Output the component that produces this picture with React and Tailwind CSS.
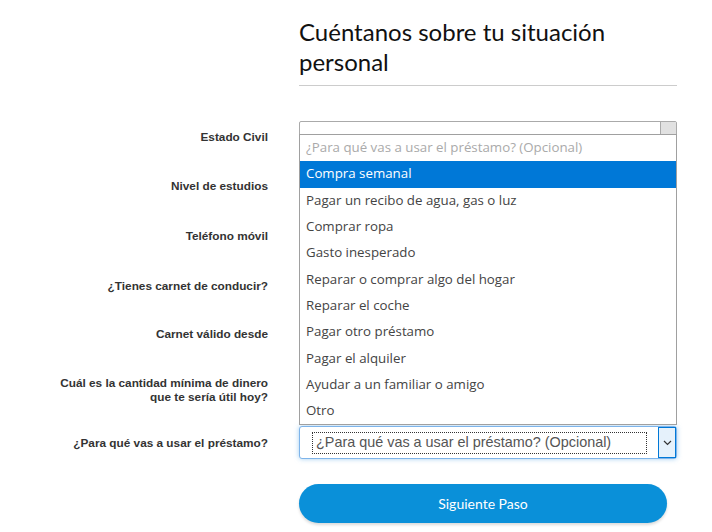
import React from 'react';

const fields = [
  { label: 'Estado Civil', gap: 'mb-[17px]', topSelect: true },
  { label: 'Nivel de estudios', gap: 'mb-[18px]' },
  { label: 'Teléfono móvil', gap: 'mb-[18px]' },
  { label: '¿Tienes carnet de conducir?', gap: 'mb-[16px]' },
  { label: 'Carnet válido desde', gap: 'mb-[24px]' },
  {
    label: (
      <>
        Cuál es la cantidad mínima de dinero
        <br />
        que te sería útil hoy?
      </>
    ),
    gap: 'mb-[20px]',
  },
];

const options = [
  'Compra semanal',
  'Pagar un recibo de agua, gas o luz',
  'Comprar ropa',
  'Gasto inesperado',
  'Reparar o comprar algo del hogar',
  'Reparar el coche',
  'Pagar otro préstamo',
  'Pagar el alquiler',
  'Ayudar a un familiar o amigo',
  'Otro',
];

const Label = ({ children }) => (
  <div className="w-[268px] shrink-0 text-right text-[11.8px] font-bold leading-[14px] text-[#333]">
    {children}
  </div>
);

export default function App() {
  return (
    <div className="relative w-[712px] h-[532px] overflow-hidden bg-white" style={{ fontFamily: '"Liberation Sans", Arial, sans-serif' }}>
      <div className="pl-[299px] pt-[17px] w-[677px]">
        <h1 className="text-[24px] leading-[30px] text-[#111] pr-[4px]" style={{ fontFamily: 'Lato, sans-serif' }}>
          Cuéntanos sobre tu situación personal
        </h1>
        <div className="mt-[8px] h-px bg-[#cccccc]" />
      </div>

      <div className="mt-[35px] flex flex-col">
        {fields.map((f, i) => (
          <div key={i} className={`flex items-center gap-[31px] h-[32px] ${f.gap}`}>
            <Label>{f.label}</Label>
            <div className="w-[378px] h-[32px]">
              {f.topSelect && (
                <div className="h-full border border-[#aaaaaa] rounded-[2px] flex justify-end">
                  <div className="w-[16px] h-[13px] bg-[#e1e1e1] border-l border-[#aaaaaa]" />
                </div>
              )}
            </div>
          </div>
        ))}

        <div className="flex items-center gap-[31px] h-[33px]">
          <Label>¿Para qué vas a usar el préstamo?</Label>
          <div className="w-[378px] h-[33px] flex border border-[#7eb4ea] rounded-[3px] shadow-[0_0_5px_rgba(102,175,233,0.6)] bg-white">
            <div className="flex-1 flex items-center pl-[12px] pr-[11px]">
              <div className="w-full h-[22px] border border-dotted border-[#333] flex items-center pl-[3px] text-[14.4px] text-[#555]">
                ¿Para qué vas a usar el préstamo? (Opcional)
              </div>
            </div>
            <div className="w-[18px] h-full bg-[#e5f1fb] border border-[#0078d7] flex items-center justify-center">
              <svg width="9" height="6" viewBox="0 0 9 6" fill="none">
                <path d="M1 1l3.5 3.5L8 1" stroke="#333" strokeWidth="1.2" />
              </svg>
            </div>
          </div>
        </div>

        <div className="mt-[25px] pl-[299px]">
          <button className="w-[368px] h-[39px] rounded-full bg-[#0a90d9] text-white text-[14px] shadow-[0_2px_3px_rgba(0,0,0,0.15)]" style={{ fontFamily: 'Lato, sans-serif' }}>
            Siguiente Paso
          </button>
        </div>
      </div>

      <div
        className="absolute left-[299px] top-[134px] w-[378px] border border-[#a0a0a0] bg-white text-[13.3px] text-[#444]"
        style={{ fontFamily: '"Open Sans", "Noto Sans", sans-serif' }}
      >
        <div className="h-[26.3px] flex items-center pl-[6px] text-[#aaaaaa]">¿Para qué vas a usar el préstamo? (Opcional)</div>
        {options.map((o, i) => (
          <div key={o} className={`h-[26.3px] flex items-center pl-[6px] ${i === 0 ? 'bg-[#0078d7] text-white' : ''}`}>
            {o}
          </div>
        ))}
      </div>
    </div>
  );
}
